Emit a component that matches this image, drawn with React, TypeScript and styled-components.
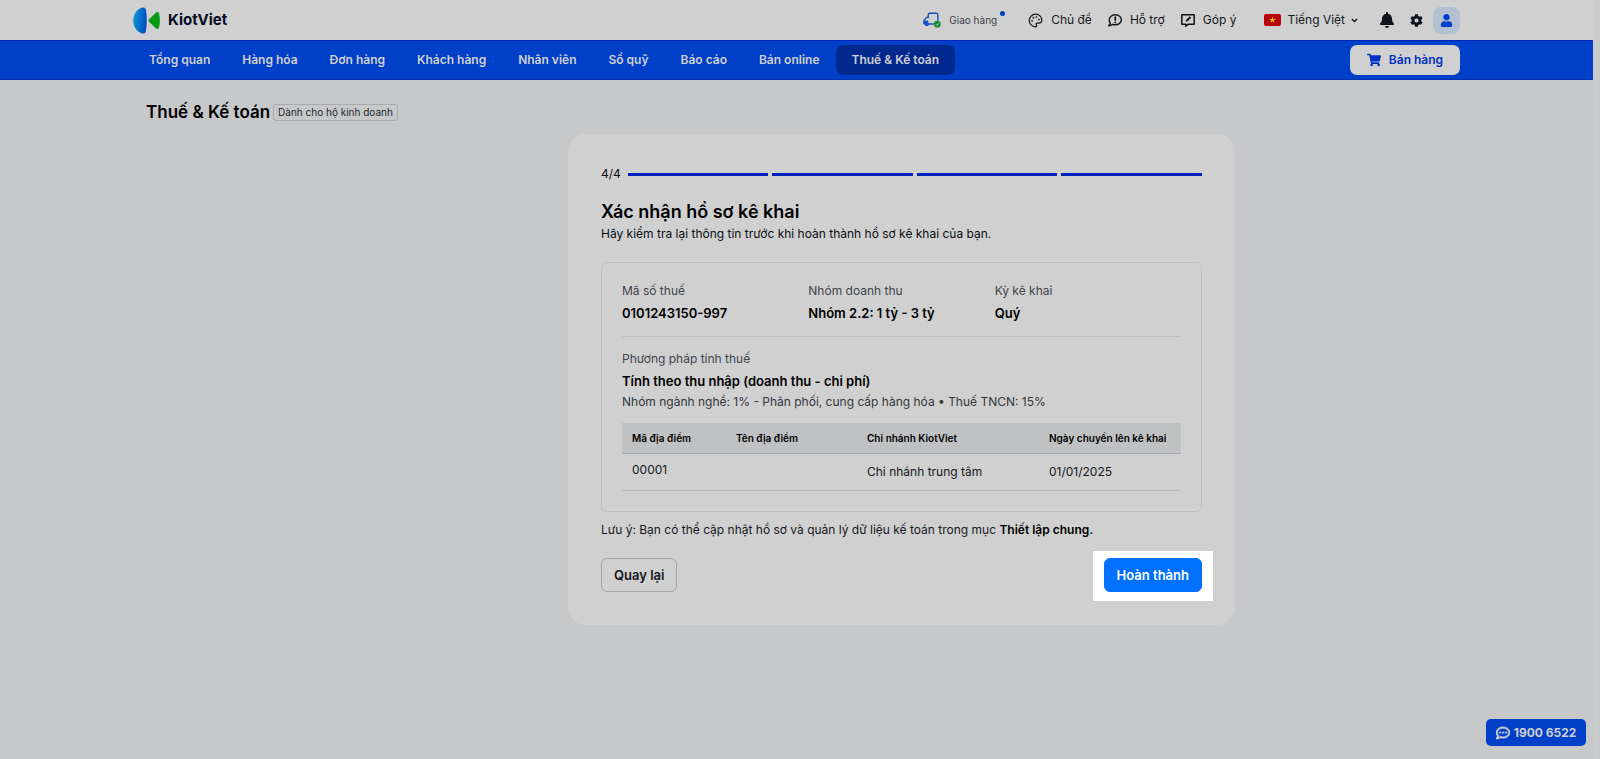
import React from "react";
import styled, { createGlobalStyle, css } from "styled-components";
import { Palette } from "lucide-react";
import { FaBell, FaCog, FaUser, FaShoppingCart, FaRegCommentDots } from "react-icons/fa";

const GlobalStyle = createGlobalStyle`
  *, *::before, *::after { box-sizing: border-box; }
  html { background: #c7c8ca; }
  body {
    margin: 0;
    font-family: Inter, "Liberation Sans", sans-serif;
    font-size: 12px;
    line-height: 16px;
    color: #0b0d12;
  }
  h1, h2, h3, p, dl, dt, dd, ul { margin: 0; padding: 0; }
  button, select { font: inherit; color: inherit; }
  a { color: inherit; text-decoration: none; }
`;

const Page = styled.div`
  min-height: 100vh;
  border-right: 7px solid #cacbcc;
`;

const Container = styled.div`
  width: 100%;
  max-width: 1327px;
  margin: 0 auto;
  display: flex;
  align-items: center;
`;

const TopBar = styled.header`
  display: flex;
  height: 40px;
  background: #d0d0d0;
`;

const Logo = styled.a`
  display: flex;
  align-items: center;
  gap: 8px;
  font-size: 15px;
  line-height: 20px;
  font-weight: 700;
  color: #060b24;
  svg { display: block; }
`;

const Tools = styled.div`
  display: flex;
  align-items: center;
  gap: 16px;
  margin-left: auto;
`;

const Tool = styled.a<{ $small?: boolean }>`
  position: relative;
  display: flex;
  align-items: center;
  gap: 8px;
  color: #16181d;
  ${(p) => p.$small && css`
    margin-right: 15px;
    font-size: 10px;
    color: #3e434b;
  `}
  svg { display: block; }
`;

const NewDot = styled.span`
  position: absolute;
  top: -1px;
  right: -8px;
  width: 5px;
  height: 5px;
  border-radius: 50%;
  background: #0040c8;
`;

const Language = styled.label`
  display: flex;
  align-items: center;
  gap: 6px;
  margin-left: 12px;
  svg { display: block; }
`;

const LanguageSelect = styled.select`
  appearance: none;
  border: 0;
  padding: 0;
  background: transparent;
  color: #16181d;
  font-size: 12px;
  line-height: 16px;
  field-sizing: content;
`;

const IconButtons = styled.div`
  display: flex;
  align-items: center;
  gap: 11px;
  margin-left: 3px;
`;

const IconButton = styled.button`
  display: flex;
  align-items: center;
  justify-content: center;
  width: 19px;
  height: 27px;
  padding: 0;
  border: 0;
  background: transparent;
  color: #0f151c;
`;

const AccountButton = styled(IconButton)`
  width: 27px;
  margin-left: -4px;
  border-radius: 8px;
  background: #b3c0d1;
  color: #0040c8;
`;

const NavBar = styled.nav`
  display: flex;
  height: 40px;
  background: #003fc8;
  border-top: 1px solid #0022bb;
  border-bottom: 1px solid #0031b0;
`;

const NavItem = styled.a<{ $active?: boolean }>`
  display: flex;
  align-items: center;
  height: 30px;
  padding: 0 16px;
  border-radius: 7px;
  font-weight: 600;
  color: #d0d0d0;
  white-space: nowrap;
  background: ${(p) => (p.$active ? "#00288f" : "transparent")};
`;

const SellButton = styled.button`
  display: flex;
  align-items: center;
  justify-content: center;
  gap: 8px;
  width: 110px;
  height: 30px;
  margin-left: auto;
  padding: 0;
  border: 0;
  border-radius: 7px;
  background: #d0d0d0;
  color: #0030c0;
  font-weight: 600;
`;

const Content = styled.main`
  max-width: 1327px;
  margin: 0 auto;
  padding-top: 22px;
`;

const TitleRow = styled.div`
  display: flex;
  align-items: center;
  gap: 3px;
  padding-left: 13px;
`;

const PageTitle = styled.h1`
  font-size: 17px;
  line-height: 20px;
  font-weight: 600;
  color: #000;
`;

const Tag = styled.span`
  padding: 0 4px;
  border: 1px solid #a9abae;
  border-radius: 3px;
  font-size: 10px;
  line-height: 15px;
  color: #23272e;
`;

const Stage = styled.div`
  display: flex;
  justify-content: center;
  margin-top: 12px;
  padding-left: 210px;
`;

const Card = styled.section`
  width: 100%;
  max-width: 667px;
  padding: 33px;
  border-radius: 18px;
  background: #d0d0d0;
`;

const Progress = styled.div`
  display: flex;
  align-items: center;
  gap: 4px;
  line-height: 14px;
`;

const StepCount = styled.span`
  margin-right: 3px;
`;

const Step = styled.span`
  flex: 1;
  height: 3px;
  background: #0021bd;
`;

const CardTitle = styled.h2`
  margin-top: 19px;
  font-size: 18px;
  line-height: 24px;
  font-weight: 600;
  color: #000;
`;

const Lead = styled.p`
  margin-top: 2px;
`;

const Summary = styled.div`
  margin-top: 20px;
  padding: 20px;
  border: 1px solid #bebfc1;
  border-radius: 6px;
`;

const Fields = styled.dl`
  display: grid;
  grid-template-columns: repeat(3, 1fr);
  padding-bottom: 14px;
  border-bottom: 1px solid #bdbec0;
`;

const Label = styled.dt`
  color: #41454c;
`;

const Value = styled.dd`
  margin-top: 5px;
  font-size: 13px;
  line-height: 18px;
  font-weight: 600;
  color: #000;
`;

const Method = styled.dl`
  margin-top: 14px;
`;

const Detail = styled.dd`
  margin-top: 4px;
  color: #33373d;
`;

const Table = styled.table`
  width: 100%;
  margin-top: 13px;
  table-layout: fixed;
  border-collapse: collapse;
  text-align: left;
`;

const Column = styled.col<{ $width?: number }>`
  width: ${(p) => (p.$width ? `${p.$width}px` : "auto")};
`;

const HeadCell = styled.th`
  height: 30px;
  padding: 0 10px;
  background: #c0c1c3;
  border-bottom: 1px solid #a4a7ad;
  font-size: 10px;
  font-weight: 600;
  color: #000;
  white-space: nowrap;
`;

const Cell = styled.td<{ $code?: boolean }>`
  height: 37px;
  padding: ${(p) => (p.$code ? "0 10px 3px" : "0 10px")};
  border-bottom: 1px solid #b8b9bb;
  color: #16181d;
`;

const Note = styled.p`
  margin-top: 10px;
  color: #16181d;
  strong { font-weight: 600; color: #000; }
`;

const Actions = styled.div`
  display: flex;
  justify-content: space-between;
  align-items: flex-start;
  margin-top: 20px;
`;

const Button = styled.button<{ $primary?: boolean }>`
  display: block;
  height: 34px;
  padding: 0 12px;
  border: 1px solid ${(p) => (p.$primary ? "#0070ff" : "#a5a7aa")};
  border-radius: 6px;
  background: ${(p) => (p.$primary ? "#0070ff" : "transparent")};
  color: ${(p) => (p.$primary ? "#fff" : "#12161d")};
  font-size: 13px;
  font-weight: 600;
`;

const Spotlight = styled.div`
  margin: -7px -11px -9px;
  padding: 7px 11px 9px;
  background: #fff;
`;

const Hotline = styled.a`
  position: fixed;
  right: 14px;
  bottom: 13px;
  display: flex;
  align-items: center;
  justify-content: center;
  gap: 4px;
  width: 100px;
  height: 27px;
  border-radius: 5px;
  background: #003fc8;
  color: #d0d0d0;
  font-weight: 700;
  svg { stroke: currentColor; stroke-width: 24px; }
`;

const LogoMark = () => (
  <svg width="27" height="27" viewBox="0 0 27 27" aria-hidden="true">
    <defs>
      <linearGradient id="logo-blue" x1="0" x2="1" y1="0.4" y2="0.6">
        <stop offset="0" stopColor="#0a96cc" />
        <stop offset="1" stopColor="#0048c8" />
      </linearGradient>
    </defs>
    <path d="M9.500 .5C11 .2 12.300 .7 12.800 2.200c1.300 7 1.300 15.600 0 22.600-.5 1.500-1.800 2-3.300 1.700C3.500 24.800.3 19.500.3 13.500S3.500 2.200 9.500.5Z" fill="url(#logo-blue)" />
    <path d="M23.200 5.500c1.200-.9 2.200-.4 2.700.8 1.300 4.700 1.300 9.700 0 14.400-.5 1.200-1.500 1.700-2.700.8l-7-6.600c-.8-.8-.8-2 0-2.800Z" fill="#079b12" />
  </svg>
);

const TruckIcon = () => (
  <svg width="18" height="16" viewBox="0 0 18 16" fill="none" aria-hidden="true">
    <path d="M5.500 12h5M5.200 5.500V3c0-1 .6-1.700 1.600-1.700h6.400c1 0 1.700.7 1.700 1.700v5" stroke="#1450c4" strokeWidth="1.400" strokeLinecap="round" />
    <path d="M5.300 5c-2 0-2.600.6-3.200 2.100L.9 8.800v2.500c0 .6.300.8.900.8" stroke="#1450c4" strokeWidth="1.300" />
    <path d="M.6 8.600h4.600v3H.6z" fill="#1450c4" />
    <circle cx="3.900" cy="12.200" r="2" fill="#1450c4" />
    <circle cx="14.300" cy="12.200" r="3.400" fill="#15902f" />
    <path d="m12.800 12.200 1.100 1.100 1.900-2" stroke="#d0d0d0" strokeWidth=".9" />
  </svg>
);

const SupportIcon = () => (
  <svg width="14" height="13" viewBox="0 0 14 13" fill="none" stroke="#101216" strokeLinejoin="round" strokeLinecap="round" aria-hidden="true">
    <path d="M7.300.8c3.400 0 6 2.200 6 5s-2.600 5-6 5c-1 0-1.900-.2-2.700-.5-.9.800-2.200 1.500-3.900 1.500.8-.9 1.300-1.700 1.500-2.800C1.600 8.200 1.300 7 1.300 5.800c0-2.800 2.600-5 6-5Z" strokeWidth="1.400" />
    <path d="M7.300 3.200v2.900M7.300 8.300v.1" strokeWidth="1.700" />
  </svg>
);

const FeedbackIcon = () => (
  <svg width="14" height="13" viewBox="0 0 14 13" fill="none" stroke="#101216" strokeLinejoin="round" aria-hidden="true">
    <path d="M.8.8h12.400v9.400H7.300L4.800 12.200v-2H.8Z" strokeWidth="1.500" />
    <path d="m4.900 7.400.4-1.500L8.700 2.600l1.200 1.200-3.400 3.300Z" fill="#101216" strokeWidth=".4" />
  </svg>
);

const Flag = () => (
  <svg width="17" height="12" viewBox="0 0 17 12" aria-hidden="true">
    <rect width="17" height="12" rx="2" fill="#b80408" />
    <path d="m8.500 2.800.8 2.200h2.300L9.800 6.400l.6 2.300-1.900-1.400-1.900 1.400.6-2.300L5.400 5h2.300Z" fill="#dfc400" />
  </svg>
);

const Chevron = () => (
  <svg width="7" height="5" viewBox="0 0 7 5" fill="none" aria-hidden="true">
    <path d="m.9.9 2.600 2.600L6.100.9" stroke="#16181d" strokeWidth="1.400" />
  </svg>
);

const navItems = [
  "Tổng quan",
  "Hàng hóa",
  "Đơn hàng",
  "Khách hàng",
  "Nhân viên",
  "Sổ quỹ",
  "Báo cáo",
  "Bán online",
  "Thuế & Kế toán",
];

const fields = [
  { label: "Mã số thuế", value: "0101243150-997" },
  { label: "Nhóm doanh thu", value: "Nhóm 2.2: 1 tỷ - 3 tỷ" },
  { label: "Kỳ kê khai", value: "Quý" },
];

export default function App() {
  return (
    <>
      <GlobalStyle />
      <Page>
        <TopBar>
          <Container>
            <Logo href="#"><LogoMark />KiotViet</Logo>
            <Tools>
              <Tool href="#" $small><TruckIcon />Giao hàng<NewDot /></Tool>
              <Tool href="#"><Palette size={15} strokeWidth={2} />Chủ đề</Tool>
              <Tool href="#"><SupportIcon />Hỗ trợ</Tool>
              <Tool href="#"><FeedbackIcon />Góp ý</Tool>
              <Language>
                <Flag />
                <LanguageSelect aria-label="Ngôn ngữ">
                  <option>Tiếng Việt</option>
                </LanguageSelect>
                <Chevron />
              </Language>
              <IconButtons>
                <IconButton aria-label="Thông báo"><FaBell size={16} /></IconButton>
                <IconButton aria-label="Thiết lập"><FaCog size={13} /></IconButton>
                <AccountButton aria-label="Tài khoản"><FaUser size={13} /></AccountButton>
              </IconButtons>
            </Tools>
          </Container>
        </TopBar>
        <NavBar>
          <Container>
            {navItems.map((item, i) => (
              <NavItem key={item} href="#" $active={i === navItems.length - 1}>{item}</NavItem>
            ))}
            <SellButton><FaShoppingCart size={14} />Bán hàng</SellButton>
          </Container>
        </NavBar>
        <Content>
          <TitleRow>
            <PageTitle>Thuế &amp; Kế toán</PageTitle>
            <Tag>Dành cho hộ kinh doanh</Tag>
          </TitleRow>
          <Stage>
            <Card>
              <Progress>
                <StepCount>4/4</StepCount>
                <Step /><Step /><Step /><Step />
              </Progress>
              <CardTitle>Xác nhận hồ sơ kê khai</CardTitle>
              <Lead>Hãy kiểm tra lại thông tin trước khi hoàn thành hồ sơ kê khai của bạn.</Lead>
              <Summary>
                <Fields>
                  {fields.map((f) => (
                    <div key={f.label}>
                      <Label>{f.label}</Label>
                      <Value>{f.value}</Value>
                    </div>
                  ))}
                </Fields>
                <Method>
                  <Label>Phương pháp tính thuế</Label>
                  <Value>Tính theo thu nhập (doanh thu - chi phí)</Value>
                  <Detail>Nhóm ngành nghề: 1% - Phân phối, cung cấp hàng hóa • Thuế TNCN: 15%</Detail>
                </Method>
                <Table>
                  <colgroup>
                    <Column $width={104} />
                    <Column $width={131} />
                    <Column $width={182} />
                    <Column />
                  </colgroup>
                  <thead>
                    <tr>
                      <HeadCell>Mã địa điểm</HeadCell>
                      <HeadCell>Tên địa điểm</HeadCell>
                      <HeadCell>Chi nhánh KiotViet</HeadCell>
                      <HeadCell>Ngày chuyển lên kê khai</HeadCell>
                    </tr>
                  </thead>
                  <tbody>
                    <tr>
                      <Cell $code>00001</Cell>
                      <Cell />
                      <Cell>Chi nhánh trung tâm</Cell>
                      <Cell>01/01/2025</Cell>
                    </tr>
                  </tbody>
                </Table>
              </Summary>
              <Note>
                Lưu ý: Bạn có thể cập nhật hồ sơ và quản lý dữ liệu kế toán trong mục <strong>Thiết lập chung.</strong>
              </Note>
              <Actions>
                <Button type="button">Quay lại</Button>
                <Spotlight>
                  <Button type="button" $primary>Hoàn thành</Button>
                </Spotlight>
              </Actions>
            </Card>
          </Stage>
        </Content>
        <Hotline href="tel:19006522"><FaRegCommentDots size={14} />1900 6522</Hotline>
      </Page>
    </>
  );
}
